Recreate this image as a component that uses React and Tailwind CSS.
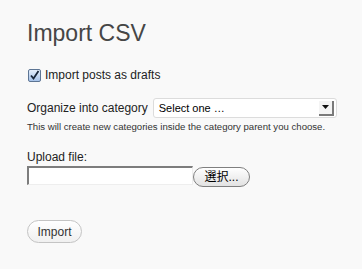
export default function App() {
  return (
    <div className="w-[362px] h-[269px] bg-[#f9f9f9] pl-[27px] pt-[22px] font-['Liberation_Sans',Arial,sans-serif] text-[#222]">
      <h1 className="text-[23px] leading-[23px] text-[#464646]">Import CSV</h1>

      {/* drafts checkbox */}
      <label className="mt-[23px] flex h-[14px] items-center text-[12px]">
        <span className="ml-[1px] mr-[4px] flex h-[13px] w-[13px] items-center justify-center rounded-[2px] border border-[#5d7594] bg-gradient-to-b from-[#e4eefb] to-[#a7c3ea]">
          <svg width="11" height="11" viewBox="0 0 11 11">
            <path d="M2 5.5 L4.5 8.5 L9.5 1" fill="none" stroke="#18263a" strokeWidth="1.8" />
          </svg>
        </span>
        Import posts as drafts
      </label>

      {/* category */}
      <div className="mt-[16px] flex items-center">
        <span className="text-[12px] mr-[5px]">Organize into category</span>
        <div className="flex h-[20px] w-[184px] items-center justify-between rounded-[3px] border border-[#dcdcdc] bg-white pl-[5px] pr-[2px]">
          <span className="text-[11px] text-black">Select one …</span>
          <span className="flex h-[15px] w-[15px] items-center justify-center border-r-2 border-b-2 border-[#7a7a7a] bg-[#f4f4f4]">
            <svg width="7" height="4" viewBox="0 0 7 4">
              <path d="M0 0 H7 L3.5 4 Z" fill="#111" />
            </svg>
          </span>
        </div>
      </div>
      <p className="mt-[3px] text-[9.6px] leading-[12px] text-[#333]">
        This will create new categories inside the category parent you choose.
      </p>

      {/* upload */}
      <p className="mt-[17px] text-[12px] leading-[14px]">Upload file:</p>
      <div className="mt-[2px] flex items-start">
        <div className="h-[19px] w-[166px] border-t-2 border-l-2 border-[#7d7d7d] border-r border-b border-r-[#eee] border-b-[#eee] bg-white" />
        <button className="mt-[1px] flex h-[20px] w-[57px] items-center justify-center rounded-full border border-[#7f7f7f] bg-gradient-to-b from-white to-[#e2e2e2] text-[12px] text-black font-['Liberation_Sans','Noto_Sans_CJK_JP',sans-serif]">
          選択...
        </button>
      </div>

      <button className="mt-[33px] flex h-[23px] w-[55px] items-center justify-center rounded-full border border-[#c4c4c4] bg-gradient-to-b from-white to-[#f0f0f0] text-[12px] text-[#333]">
        Import
      </button>
    </div>
  )
}
